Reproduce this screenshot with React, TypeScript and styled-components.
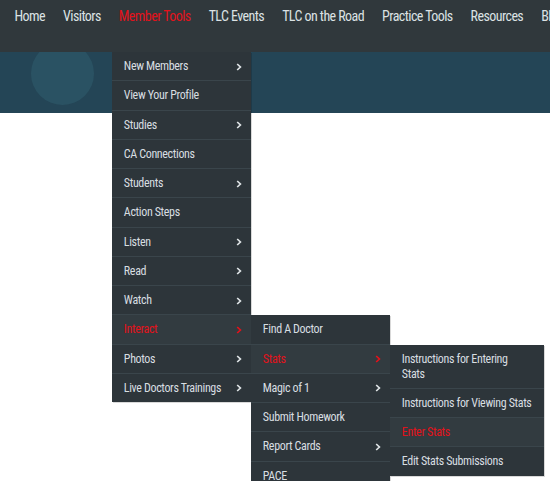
import styled, { createGlobalStyle } from "styled-components";

const GlobalStyle = createGlobalStyle`
  html, body {
    margin: 0;
    padding: 0;
    background: #ffffff;
    overflow: hidden;
  }
  body {
    font-family: "Roboto Condensed", "Liberation Sans Narrow", "DejaVu Sans Condensed", sans-serif;
  }
`;

const Page = styled.div`
  width: 550px;
  height: 481px;
  position: relative;
  overflow: hidden;
`;

const TopNav = styled.nav`
  height: 52px;
  background-color: #30383c;
  display: flex;
  align-items: flex-start;
  gap: 4px;
  padding-left: 7.5px;
  white-space: nowrap;
  position: relative;
  z-index: 5;
`;

const NavItem = styled.div<{ $active?: boolean }>`
  position: relative;
  padding: 8px 7px 0;
  height: 44px;
  font-size: 14px;
  line-height: 17px;
  letter-spacing: -0.57px;
  color: ${(p) => (p.$active ? "#e3121b" : "#dce2e4")};
  cursor: pointer;
`;

const Banner = styled.div`
  height: 61px;
  background-color: #244556;
  position: relative;
  overflow: hidden;
`;

const Bubble = styled.div`
  position: absolute;
  left: 31px;
  top: -10px;
  width: 63px;
  height: 63px;
  border-radius: 50%;
  background-color: #2c5565;
  opacity: 0.85;
`;

const Menu = styled.ul<{ $width: number; $level: number }>`
  position: absolute;
  top: ${(p) => (p.$level === 0 ? "100%" : "0")};
  left: ${(p) => (p.$level === 0 ? "0" : "100%")};
  width: ${(p) => p.$width}px;
  margin: 0;
  padding: 0;
  list-style: none;
  background-color: #2d353a;
  letter-spacing: -0.35px;
  box-shadow: 1px 1px 0 rgba(0, 0, 0, 0.15);
`;

const MenuItem = styled.li<{ $active?: boolean }>`
  position: relative;
  display: flex;
  align-items: center;
  justify-content: space-between;
  padding: 7px 12px 6.25px 12px;
  font-size: 12px;
  line-height: 15px;
  color: ${(p) => (p.$active ? "#e3121b" : "#d8dee1")};
  background-color: ${(p) => (p.$active ? "#323b40" : "#2d353a")};
  border-bottom: 1px solid #3a454b;
  white-space: normal;

  &:last-child {
    border-bottom: none;
  }
`;

const Label = styled.span`
  flex: 1;
`;

const Chevron = styled.svg<{ $active?: boolean }>`
  width: 6px;
  height: 8px;
  flex: none;
  margin-right: -3px;
  color: ${(p) => (p.$active ? "#e3121b" : "#dfe4e6")};
`;

type Entry = { label: string; sub?: boolean; active?: boolean; children?: Entry[]; width?: number };

const statsItems: Entry[] = [
  { label: "Instructions for Entering Stats" },
  { label: "Instructions for Viewing Stats" },
  { label: "Enter Stats", active: true },
  { label: "Edit Stats Submissions" },
];

const interactItems: Entry[] = [
  { label: "Find A Doctor" },
  { label: "Stats", sub: true, active: true, children: statsItems, width: 154 },
  { label: "Magic of 1", sub: true },
  { label: "Submit Homework" },
  { label: "Report Cards", sub: true },
  { label: "PACE" },
];

const memberTools: Entry[] = [
  { label: "New Members", sub: true },
  { label: "View Your Profile" },
  { label: "Studies", sub: true },
  { label: "CA Connections" },
  { label: "Students", sub: true },
  { label: "Action Steps" },
  { label: "Listen", sub: true },
  { label: "Read", sub: true },
  { label: "Watch", sub: true },
  { label: "Interact", sub: true, active: true, children: interactItems, width: 139 },
  { label: "Photos", sub: true },
  { label: "Live Doctors Trainings", sub: true },
];

const navLinks = ["Home", "Visitors", "Member Tools", "TLC Events", "TLC on the Road", "Practice Tools", "Resources", "Blog"];

const Arrow = ({ active }: { active?: boolean }) => (
  <Chevron $active={active} viewBox="0 0 6 8">
    <path d="M1.2 1 L4.4 4 L1.2 7" fill="none" stroke="currentColor" strokeWidth="1.7" />
  </Chevron>
);

const DropMenu = ({ items, width, level }: { items: Entry[]; width: number; level: number }) => (
  <Menu $width={width} $level={level}>
    {items.map((it) => (
      <MenuItem key={it.label} $active={it.active}>
        <Label>{it.label}</Label>
        {it.sub && <Arrow active={it.active} />}
        {it.children && <DropMenu items={it.children} width={it.width ?? 139} level={level + 1} />}
      </MenuItem>
    ))}
  </Menu>
);

export default function App() {
  return (
    <Page>
      <GlobalStyle />
      <TopNav>
        {navLinks.map((l) => (
          <NavItem key={l} $active={l === "Member Tools"}>
            {l}
            {l === "Member Tools" && <DropMenu items={memberTools} width={139} level={0} />}
          </NavItem>
        ))}
      </TopNav>
      <Banner>
        <Bubble />
      </Banner>
    </Page>
  );
}
